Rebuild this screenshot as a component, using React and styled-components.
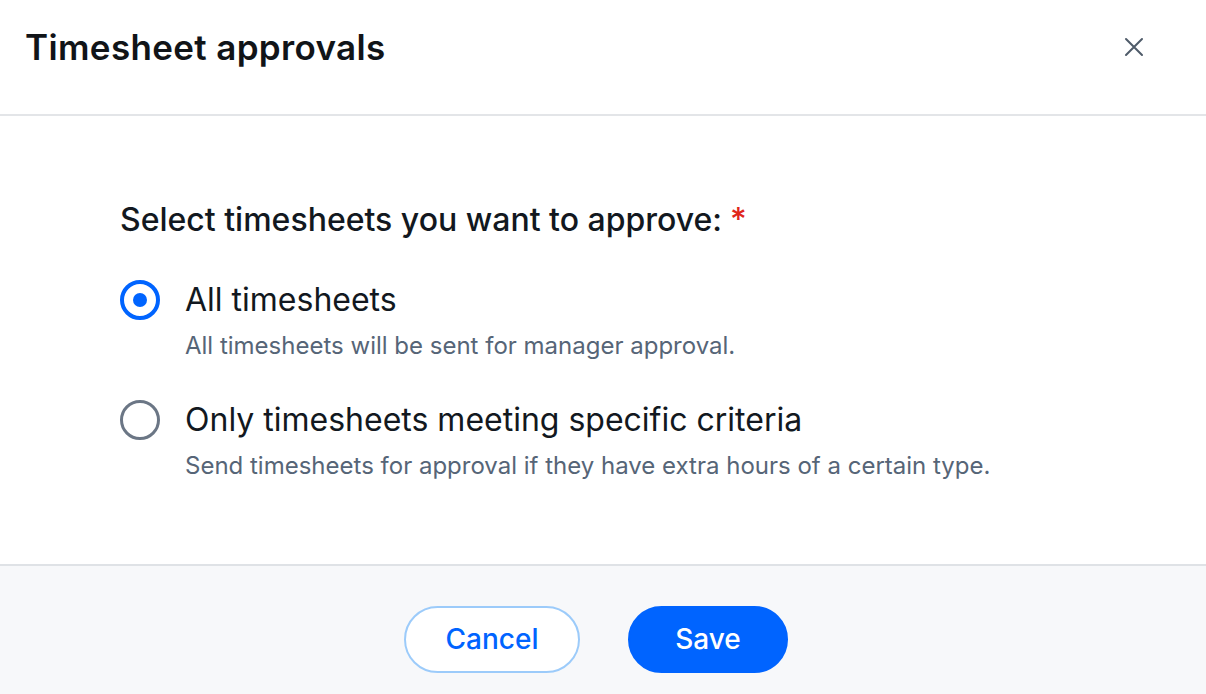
import styled, { createGlobalStyle } from "styled-components";

const GlobalStyle = createGlobalStyle`
  html, body {
    margin: 0;
    padding: 0;
    background: #ffffff;
    font-family: Inter, "Noto Sans", sans-serif;
    color: #121820;
  }
  * {
    box-sizing: border-box;
  }
`;

const Modal = styled.div`
  width: 1206px;
  height: 694px;
  display: flex;
  flex-direction: column;
  background: #ffffff;
  overflow: hidden;
`;

const Header = styled.header`
  height: 116px;
  flex-shrink: 0;
  display: flex;
  align-items: center;
  justify-content: space-between;
  padding: 0 52px 20px 25px;
  border-bottom: 2px solid #e3e5e8;
`;

const Title = styled.h1`
  margin: 0;
  font-family: Inter, sans-serif;
  font-size: 35px;
  font-weight: 600;
  color: #111418;
  letter-spacing: 0.35px;
`;

const CloseButton = styled.button`
  width: 40px;
  height: 40px;
  border: none;
  background: transparent;
  display: flex;
  align-items: center;
  justify-content: center;
  padding: 0;
  cursor: pointer;
`;

const Body = styled.main`
  height: 448px;
  flex-shrink: 0;
  padding: 84px 120px 0 120px;
`;

const Question = styled.div`
  font-size: 32px;
  line-height: 40px;
  font-weight: 500;
  color: #121820;
  margin-bottom: 40px;
`;

const Required = styled.span`
  color: #e0261b;
  margin-left: 8px;
`;

const Options = styled.div`
  display: flex;
  flex-direction: column;
  gap: 39px;
`;

const Option = styled.label`
  display: grid;
  grid-template-columns: 40px 1fr;
  column-gap: 25px;
  row-gap: 11px;
  align-items: center;
  cursor: pointer;
`;

const Radio = styled.span`
  width: 40px;
  height: 40px;
  border-radius: 50%;
  border: ${(p) => (p.$checked ? "4px solid #0064ff" : "3px solid #6b7685")};
  display: flex;
  align-items: center;
  justify-content: center;

  &::after {
    content: "";
    width: 14px;
    height: 14px;
    border-radius: 50%;
    background: #0064ff;
    display: ${(p) => (p.$checked ? "block" : "none")};
  }
`;

const OptionTitle = styled.span`
  font-size: 32px;
  line-height: 40px;
  color: #121820;
`;

const OptionHint = styled.span`
  grid-column: 2;
  font-size: 24px;
  line-height: 30px;
  color: #566577;
`;

const Footer = styled.footer`
  height: 150px;
  flex-shrink: 0;
  background: #f7f8fa;
  border-top: 2px solid #dfe2e6;
  display: flex;
  align-items: center;
  justify-content: center;
  gap: 48px;
  padding-right: 14px;
  padding-bottom: 2px;
`;

const Button = styled.button`
  height: 67px;
  width: ${(p) => (p.$primary ? "160px" : "176px")};
  border-radius: 34px;
  font-family: Inter, sans-serif;
  font-size: 28px;
  font-weight: 500;
  cursor: pointer;
  border: 2px solid ${(p) => (p.$primary ? "#0064ff" : "#9ccbfa")};
  background: ${(p) => (p.$primary ? "#0064ff" : "#ffffff")};
  color: ${(p) => (p.$primary ? "#ffffff" : "#0064ff")};
`;

const options = [
  {
    title: "All timesheets",
    hint: "All timesheets will be sent for manager approval.",
    checked: true,
  },
  {
    title: "Only timesheets meeting specific criteria",
    hint: "Send timesheets for approval if they have extra hours of a certain type.",
    checked: false,
  },
];

export default function App() {
  return (
    <>
      <GlobalStyle />
      <Modal>
        <Header>
          <Title>Timesheet approvals</Title>
          <CloseButton aria-label="Close">
            <svg width="20" height="20" viewBox="0 0 20 20" fill="none">
              <path
                d="M2 2L18 18M18 2L2 18"
                stroke="#4f5b69"
                strokeWidth="2"
                strokeLinecap="round"
              />
            </svg>
          </CloseButton>
        </Header>
        <Body>
          <Question>
            Select timesheets you want to approve:<Required>*</Required>
          </Question>
          <Options>
            {options.map((o) => (
              <Option key={o.title}>
                <Radio $checked={o.checked} />
                <OptionTitle>{o.title}</OptionTitle>
                <OptionHint>{o.hint}</OptionHint>
              </Option>
            ))}
          </Options>
        </Body>
        <Footer>
          <Button>Cancel</Button>
          <Button $primary>Save</Button>
        </Footer>
      </Modal>
    </>
  );
}
